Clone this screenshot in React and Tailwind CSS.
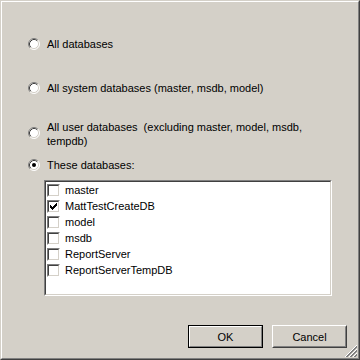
import React from "react";

function Radio({ checked }) {
  return (
    <svg width="12" height="12" viewBox="0 0 12 12" className="shrink-0 block">
      <circle cx="6" cy="6" r="5" fill="#ffffff" />
      <path d="M2.11 9.89 A5.5 5.5 0 0 1 9.89 2.11" fill="none" stroke="#808080" />
      <path d="M9.89 2.11 A5.5 5.5 0 0 1 2.11 9.89" fill="none" stroke="#ffffff" />
      <path d="M2.82 9.18 A4.5 4.5 0 0 1 9.18 2.82" fill="none" stroke="#404040" />
      <path d="M9.18 2.82 A4.5 4.5 0 0 1 2.82 9.18" fill="none" stroke="#d4d0c8" />
      {checked && <circle cx="6" cy="6" r="2" fill="#000000" />}
    </svg>
  );
}

const checkCols = [
  [1, 3],
  [2, 4],
  [3, 5],
  [4, 4],
  [5, 3],
  [6, 2],
  [7, 1],
];

function Check({ checked }) {
  return (
    <div className="w-[13px] h-[13px] shrink-0 border border-t-[#808080] border-l-[#808080] border-r-white border-b-white">
      <div className="w-full h-full border border-t-[#404040] border-l-[#404040] border-r-[#d4d0c8] border-b-[#d4d0c8] bg-white">
        {checked && (
          <svg width="9" height="9" viewBox="0 0 9 9" className="block" shapeRendering="crispEdges">
            {checkCols.map(([x, y]) => (
              <rect key={x} x={x} y={y} width="1" height="3" fill="#000000" />
            ))}
          </svg>
        )}
      </div>
    </div>
  );
}

function Grip() {
  const px = [];
  for (let x = 0; x < 12; x++) {
    for (let y = 0; y < 12; y++) {
      const d = x + y;
      if (d >= 11) {
        const m = (d - 11) % 4;
        if (m === 0) px.push([x, y, "#ffffff"]);
        else if (m === 1 || m === 2) px.push([x, y, "#808080"]);
      }
    }
  }
  return (
    <svg width="12" height="12" viewBox="0 0 12 12" className="absolute right-[1px] bottom-[1px]" shapeRendering="crispEdges">
      {px.map(([x, y, c]) => (
        <rect key={x + "-" + y} x={x} y={y} width="1" height="1" fill={c} />
      ))}
    </svg>
  );
}

const dbs = [
  ["master", false],
  ["MattTestCreateDB", true],
  ["model", false],
  ["msdb", false],
  ["ReportServer", false],
  ["ReportServerTempDB", false],
];

export default function App() {
  return (
    <div className="w-[360px] h-[360px] bg-[#d4d0c8] border border-t-[#d4d0c8] border-l-[#d4d0c8] border-r-[#404040] border-b-[#404040] font-['Liberation_Sans',sans-serif] text-[11px] leading-[14px] text-black">
      <div className="relative w-full h-full border border-t-white border-l-white border-r-[#808080] border-b-[#808080] flex flex-col pl-[26px] pt-[33px]">
        <div className="flex items-center h-[17px]">
          <Radio />
          <span className="ml-[7px]">All databases</span>
        </div>
        <div className="flex items-center h-[17px] mt-[27px]">
          <Radio />
          <span className="ml-[7px]">All system databases (master, msdb, model)</span>
        </div>
        <div className="flex items-start h-[28px] mt-[24px]">
          <div className="mt-[7px]">
            <Radio />
          </div>
          <span className="ml-[7px] whitespace-pre">
            {"All user databases  (excluding master, model, msdb,"}
            <br />
            {"tempdb)"}
          </span>
        </div>
        <div className="flex items-center h-[17px] mt-[8px]">
          <Radio checked />
          <span className="ml-[7px]">These databases:</span>
        </div>
        <div className="ml-[16px] mt-[7px] w-[288px] h-[116px] border border-t-[#808080] border-l-[#808080] border-r-white border-b-white">
          <div className="w-full h-full bg-white border border-t-[#404040] border-l-[#404040] border-r-[#d4d0c8] border-b-[#d4d0c8] flex flex-col pl-[1px]">
            {dbs.map(([name, checked]) => (
              <div key={name} className="flex items-center h-[16px]">
                <Check checked={checked} />
                <span className="ml-[5px]">{name}</span>
              </div>
            ))}
          </div>
        </div>
        <div className="mt-auto flex justify-end gap-[9px] pr-[11px] pb-[10px]">
          <div className="w-[75px] h-[23px] border border-black">
            <div className="w-full h-full border border-t-white border-l-white border-r-[#808080] border-b-[#808080] flex items-center justify-center">
              OK
            </div>
          </div>
          <div className="w-[75px] h-[23px] border border-t-white border-l-white border-r-[#404040] border-b-[#404040]">
            <div className="w-full h-full border border-t-[#d4d0c8] border-l-[#d4d0c8] border-r-[#808080] border-b-[#808080] flex items-center justify-center">
              Cancel
            </div>
          </div>
        </div>
        <Grip />
      </div>
    </div>
  );
}
